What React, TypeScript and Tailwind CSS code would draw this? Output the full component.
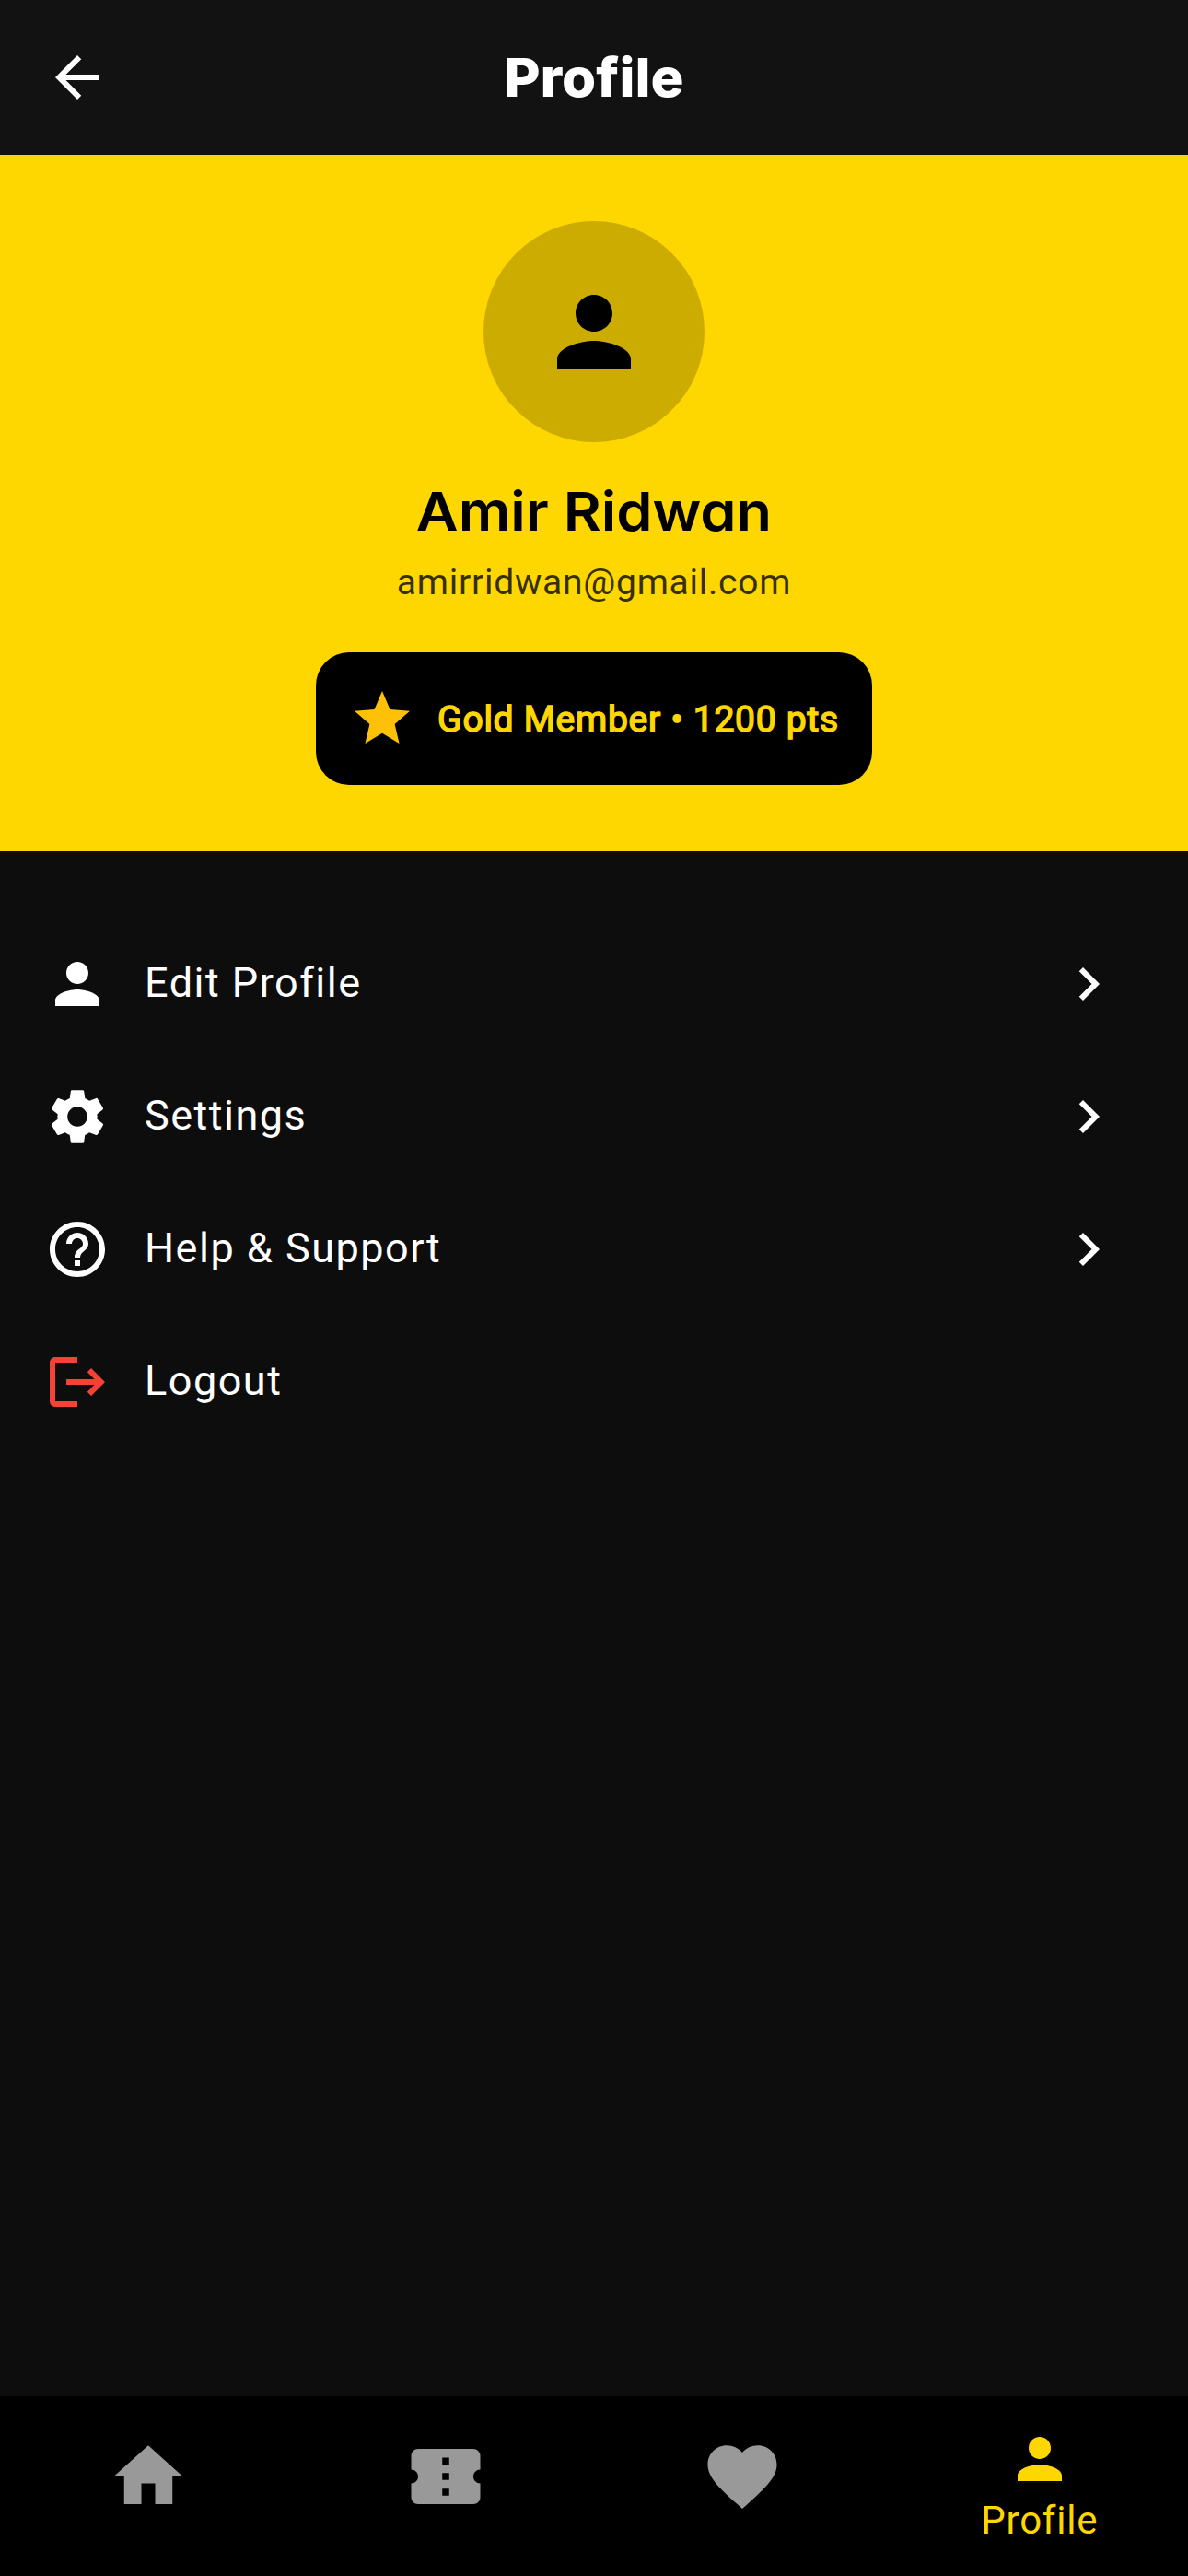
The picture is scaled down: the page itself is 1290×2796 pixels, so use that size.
import type { ReactNode } from "react";
import {
  MdArrowBack,
  MdChevronRight,
  MdConfirmationNumber,
  MdFavorite,
  MdHelpOutline,
  MdHome,
  MdPerson,
  MdSettings,
  MdStar,
} from "react-icons/md";

function LogoutIcon() {
  return (
    <svg viewBox="0 0 24 24" className="size-[72px] text-[#f44336]" fill="currentColor">
      <path d="M17 7l-1.41 1.41L18.17 11H8v2h10.17l-2.58 2.58L17 17l5-5zM4 5h8V3H4c-1.1 0-2 .9-2 2v14c0 1.1.9 2 2 2h8v-2H4V5z" />
    </svg>
  );
}

function MenuRow({ icon, label, chevron = true }: { icon: ReactNode; label: string; chevron?: boolean }) {
  return (
    <li className="flex h-36 items-center pr-[72px] pl-12">
      {icon}
      <span className="ml-[37px] flex-1 pb-[3px] text-[45px] leading-[66px] tracking-[1.5px]">{label}</span>
      {chevron && <MdChevronRight className="size-[72px]" />}
    </li>
  );
}

export default function App() {
  return (
    <div className="flex h-[2796px] w-[1290px] flex-col bg-[#0d0d0d] font-['Roboto',sans-serif] text-white">
      <header className="grid h-[168px] shrink-0 grid-cols-[72px_1fr_72px] items-center bg-[#121212] px-12">
        <MdArrowBack className="size-[72px]" />
        <h1 className="scale-x-[1.035] text-center font-['Inter',sans-serif] text-[58px] leading-[84px] font-extrabold">Profile</h1>
      </header>

      <section className="flex h-[756px] shrink-0 flex-col items-center bg-[#ffd700] pt-[72px] text-black">
        <div className="flex size-[240px] items-center justify-center rounded-full bg-black/20">
          <MdPerson className="size-[120px]" />
        </div>
        <h2 className="mt-[30px] scale-x-[1.085] font-['Inter',sans-serif] text-[58px] leading-[90px] font-semibold [font-feature-settings:'cv11'_1]">
          Amir Ridwan
        </h2>
        <p className="mt-0.5 text-[39px] leading-[60px] tracking-[0.75px] text-black/80">amirridwan@gmail.com</p>
        <div className="mt-[46px] flex h-36 items-center gap-6 rounded-[36px] bg-black px-9 text-[#ffd700]">
          <MdStar className="size-[72px] text-[#ffc107]" />
          <span className="pt-0.5 text-[39px] leading-[60px] tracking-[0.75px] [-webkit-text-stroke:1.5px_#ffd700]">
            Gold Member • 1200 pts
          </span>
        </div>
      </section>

      <ul className="flex-1 pt-[72px]">
        <MenuRow icon={<MdPerson className="size-[72px]" />} label="Edit Profile" />
        <MenuRow icon={<MdSettings className="size-[72px]" />} label="Settings" />
        <MenuRow icon={<MdHelpOutline className="size-[72px]" />} label="Help & Support" />
        <MenuRow icon={<LogoutIcon />} label="Logout" chevron={false} />
      </ul>

      <nav className="grid h-[195px] shrink-0 grid-cols-4 bg-black text-[#999999]">
        <div className="flex justify-center pt-[42px]">
          <MdHome className="size-[90px]" />
        </div>
        <div className="flex justify-center pt-[42px]">
          <MdConfirmationNumber className="size-[90px]" />
        </div>
        <div className="flex justify-center pt-[42px]">
          <MdFavorite className="size-[90px]" />
        </div>
        <div className="flex flex-col items-center pt-8 text-[#ffd700]">
          <MdPerson className="size-[72px]" />
          <span className="mt-px text-[42px] leading-[60px] tracking-[0.75px]">Profile</span>
        </div>
      </nav>
    </div>
  );
}
